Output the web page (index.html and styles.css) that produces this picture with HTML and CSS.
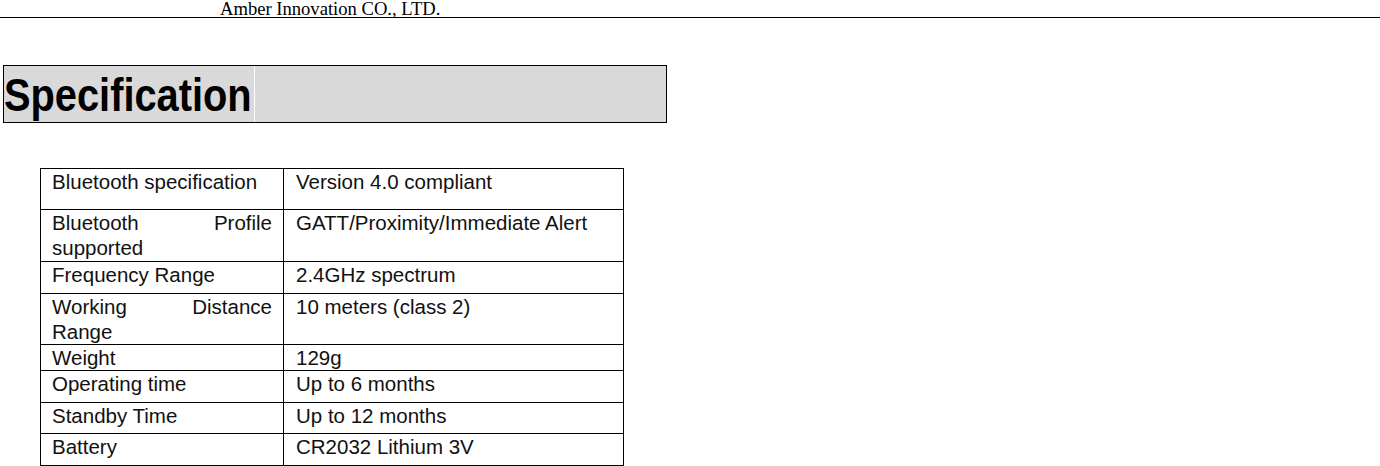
FILE: index.html
```html
<!DOCTYPE html>
<html>
<head>
<meta charset="utf-8">
<link rel="stylesheet" href="styles.css">
</head>
<body>
<header class="page-head"><span class="company">Amber Innovation CO., LTD.</span></header>
<section class="spec-bar">
  <h1 class="spec-title"><span class="spec-text">Specification</span></h1>
  <div class="spec-fill"></div>
</section>
<table class="spec-table">
  <tr class="r1"><td class="k">Bluetooth specification</td><td class="v">Version 4.0 compliant</td></tr>
  <tr class="r2"><td class="k">Bluetooth Profile supported</td><td class="v">GATT/Proximity/Immediate Alert</td></tr>
  <tr class="r3"><td class="k">Frequency Range</td><td class="v">2.4GHz spectrum</td></tr>
  <tr class="r4"><td class="k">Working Distance Range</td><td class="v">10 meters (class 2)</td></tr>
  <tr class="r5"><td class="k">Weight</td><td class="v">129g</td></tr>
  <tr class="r6"><td class="k">Operating time</td><td class="v">Up to 6 months</td></tr>
  <tr class="r7"><td class="k">Standby Time</td><td class="v">Up to 12 months</td></tr>
  <tr class="r8"><td class="k">Battery</td><td class="v">CR2032 Lithium 3V</td></tr>
</table>
</body>
</html>
```
FILE: styles.css
```css
html, body {
  margin: 0;
  padding: 0;
  background: #fff;
  color: #000;
}
.page-head {
  height: 17px;
  border-bottom: 1px solid #000;
  padding-left: 220px;
  font-family: "Liberation Serif", serif;
  font-size: 18.6px;
  line-height: 18px;
}
.company {
  display: inline-block;
  vertical-align: top;
}
.spec-bar {
  display: flex;
  margin: 47px 0 0 3px;
  width: 662px;
  height: 56px;
  border: 1px solid #000;
  background: #d9d9d9;
}
.spec-title {
  margin: 0;
  flex: 0 0 250px;
  border-right: 1px solid #fff;
  font-family: "Liberation Sans", Arial, sans-serif;
  font-weight: bold;
  font-size: 46px;
  line-height: 58px;
  color: #000;
  white-space: nowrap;
  overflow: hidden;
}
.spec-text {
  display: inline-block;
  transform: scaleX(0.865);
  transform-origin: 0 50%;
}
.spec-fill {
  flex: 1;
}
.spec-table {
  margin: 45px 0 0 40px;
  border-collapse: collapse;
  width: 584px;
  font-family: "Liberation Sans", Arial, sans-serif;
  font-size: 20.5px;
  line-height: 25px;
  color: #111;
}
.spec-table td {
  border: 1px solid #000;
  vertical-align: top;
  padding: 0 11px;
}
.spec-table td.k {
  width: 220px;
  text-align: justify;
}
.spec-table td.v {
  padding-left: 12px;
}
.r1 { height: 41px; }
.r2 { height: 52px; }
.r3 { height: 32px; }
.r4 { height: 51px; }
.r5 { height: 25px; }
.r6 { height: 32px; }
.r7 { height: 31px; }
.r8 { height: 32px; }
```
